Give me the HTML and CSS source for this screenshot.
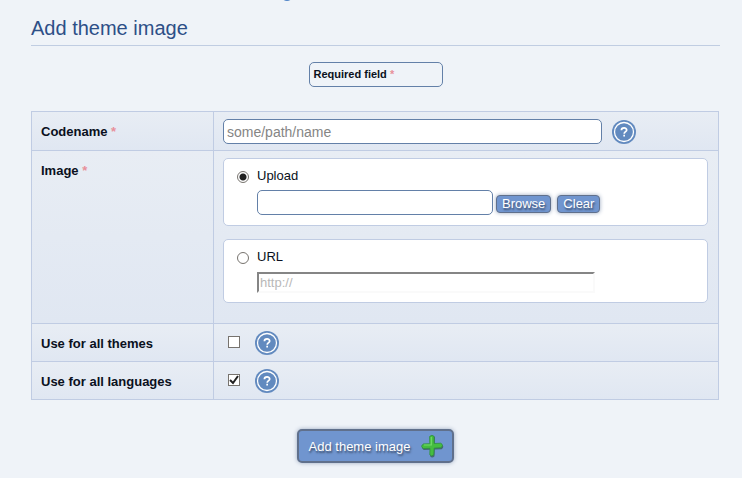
FILE: index.html
```html
<!DOCTYPE html>
<html lang="en">
<head>
<meta charset="utf-8">
<title>Add theme image</title>
<link rel="stylesheet" href="styles.css">
</head>
<body>
<svg class="symbols" aria-hidden="true">
  <symbol id="help" viewBox="0 0 24 24">
    <circle cx="12" cy="12" r="12" fill="#628abf"/>
    <circle cx="12" cy="12" r="9.5" fill="none" stroke="#fff" stroke-width="1.3"/>
    <path d="M9.4 10.3c0-3.1 5.3-3.1 5.3-.3 0 1.6-2.5 1.7-2.5 3.8" fill="none" stroke="#fff" stroke-width="1.7"/>
    <path d="M11.3 14.8H13v1.8h-1.7z" fill="#fff"/>
  </symbol>
</svg>
<span class="page-mark"></span>
<main>
  <h1>Add theme image</h1>
  <p class="required-note">Required field <span class="star">*</span></p>
  <form>
    <div class="fields">
      <div class="row">
        <label class="name" for="codename">Codename <span class="star">*</span></label>
        <div class="value">
          <input class="text codename" id="codename" type="text" placeholder="some/path/name">
          <svg class="help"><use href="#help"/></svg>
        </div>
      </div>
      <div class="row">
        <div class="name" id="image-label">Image <span class="star">*</span></div>
        <div class="value choices" role="group" aria-labelledby="image-label">
          <div class="choice">
            <input class="radio" type="radio" name="source" id="upload" checked>
            <div class="choice-body">
              <label for="upload">Upload</label>
              <div class="picker">
                <input class="text file-name" type="text" aria-label="File to upload">
                <button class="small" type="button">Browse</button>
                <button class="small" type="button">Clear</button>
              </div>
            </div>
          </div>
          <div class="choice">
            <input class="radio" type="radio" name="source" id="url">
            <div class="choice-body">
              <label for="url">URL</label>
              <input class="address" type="text" placeholder="http://" aria-label="Image URL">
            </div>
          </div>
        </div>
      </div>
      <div class="row">
        <label class="name" for="themes">Use for all themes</label>
        <div class="value">
          <input class="check" type="checkbox" id="themes">
          <svg class="help"><use href="#help"/></svg>
        </div>
      </div>
      <div class="row">
        <label class="name" for="languages">Use for all languages</label>
        <div class="value">
          <input class="check" type="checkbox" id="languages" checked>
          <svg class="help"><use href="#help"/></svg>
        </div>
      </div>
    </div>
    <button class="submit" type="submit">Add theme image
      <svg class="plus" viewBox="0 0 24 24" aria-hidden="true">
        <path d="M10.3 3Q13 .5 15 3.2l-.2 7.3 6.8-.3q3.4 2.6 0 5l-6.8.3-.3 6.8q-2.4 2.4-4.4 0l.2-6.6-6.6.2q-3.8-2.6 0-5.3l6.6-.2z" fill="#385f58" opacity=".8"/>
        <path d="M9.6 2.5Q12 0 14.1 2.5V9.500l6.700-.3q3.300 2.100 0 4.500l-6.700.4-.3 6.700q-2.200 2.200-4 0l.2-6.500-6.500.2q-3.700-2.300 0-4.600l6.300-.2z" fill="#45bd40" stroke="#2f9140" stroke-width=".8"/>
        <path d="M11.300 3v8H4" fill="none" stroke="#72d968" stroke-width="1.200"/>
      </svg>
    </button>
  </form>
</main>
</body>
</html>
```
FILE: styles.css
```css
* { box-sizing: border-box; }
body {
  margin: 0;
  padding: 16px 22px 14px 31px;
  background: #eff3f8;
  color: #0a1020;
  font: 12px/16px "Liberation Sans", Arial, sans-serif;
}
.symbols { position: absolute; width: 0; height: 0; }
.page-mark {
  position: absolute;
  top: -11px;
  left: 281px;
  width: 12px;
  height: 12px;
  border-radius: 50%;
  background: #5084c8;
}
h1 {
  margin: 0;
  padding-bottom: 5px;
  border-bottom: 1px solid #c0cde2;
  color: #2d4f87;
  font-size: 20px;
  font-weight: normal;
  line-height: 24px;
}
.required-note {
  width: 134px;
  margin: 16px auto 24px;
  padding: 4px;
  border: 1px solid #6380a8;
  border-radius: 5px;
  font-size: 11px;
  font-weight: bold;
  line-height: 15px;
}
.star { color: #e8909a; }
.fields { margin-right: 1px; border: 1px solid #c0cce3; }
.row {
  display: grid;
  grid-template-columns: 181px 1fr;
  background: linear-gradient(#e8edf4, #e0e7f2);
}
.row + .row { border-top: 1px solid #c0cce3; }
.name {
  padding: 12px 9px 9px;
  font-size: 13px;
  font-weight: bold;
}
.value {
  display: flex;
  align-items: center;
  padding: 7px 10px 6px 9px;
  border-left: 1px solid #c0cce3;
}
.text {
  height: 25px;
  padding: 0 3px;
  border: 1px solid #6380a8;
  border-radius: 5px;
  background: #fff;
  font: 14px "Liberation Sans", Arial, sans-serif;
}
.text::placeholder { color: #858585; opacity: 1; }
.codename { flex: 0 1 379px; min-width: 0; margin-right: 10px; }
.help { flex: none; width: 24px; height: 24px; }
.choices {
  flex-direction: column;
  align-items: stretch;
  gap: 13px;
  padding-bottom: 20px;
}
.choice {
  display: flex;
  gap: 8px;
  padding: 9px 13px;
  border: 1px solid #c0cce3;
  border-radius: 5px;
  background: #fff;
}
.choice-body { flex: 1; min-width: 0; }
.choice-body label { display: block; font-size: 13px; }
.radio, .check {
  appearance: none;
  flex: none;
  border: 1px solid #77736e;
  background: #fff;
}
.radio { width: 12px; height: 12px; margin: 3px 0 0; border-radius: 50%; }
.radio:checked { background: radial-gradient(circle, #222 0 3px, #fff 4px); }
.check { width: 12px; height: 12px; margin: 0 15px 2px 5px; }
.check:checked {
  background: url("data:image/svg+xml,%3Csvg xmlns='http://www.w3.org/2000/svg' viewBox='0 0 10 10'%3E%3Cpath d='M1 5l3 3 5-7' fill='none' stroke='%23222' stroke-width='2'/%3E%3C/svg%3E") #fff;
}
.picker {
  display: flex;
  align-items: end;
  margin-top: 6px;
  padding-bottom: 1px;
}
.file-name { flex: 0 1 236px; min-width: 0; margin-right: 3px; }
.small, .submit {
  border: 1px solid #60708c;
  background: #7095cf;
  color: #fff;
  font: 13px "Liberation Sans", Arial, sans-serif;
  text-shadow: 1px 2px 2px #384864;
  box-shadow: 0 0 4px #9aa9c0;
}
.small {
  height: 18px;
  margin: 0 6px 2px 0;
  padding: 0 5px 1px;
  border-radius: 4px;
  line-height: 15px;
}
.address {
  display: block;
  width: 338px;
  max-width: 100%;
  height: 21px;
  margin-top: 7px;
  padding: 0 1px;
  border: 2px solid;
  border-color: #858585 #fafafa #fafafa #858585;
  background: #fff;
  font: 13px "Liberation Sans", Arial, sans-serif;
}
.address::placeholder { color: #b8b8b8; opacity: 1; }
.submit {
  display: flex;
  align-items: center;
  gap: 10px;
  height: 34px;
  margin: 29px auto 0;
  padding: 0 8px 0 10px;
  border-width: 2px;
  border-radius: 5px;
}
.plus { width: 24px; height: 24px; }
```
